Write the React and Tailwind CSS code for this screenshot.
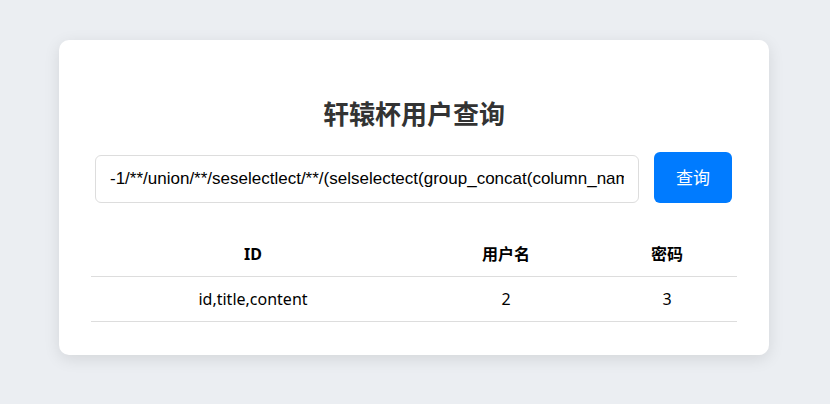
export default function App() {
  const rows = [{ id: "id,title,content", username: "2", password: "3" }];

  return (
    <div className="min-h-screen bg-[#ebeef2] pt-[40px] font-['Noto_Sans','Noto_Sans_CJK_SC',sans-serif]">
      <div className="ml-[59px] w-[710px] rounded-[10px] bg-white px-8 pt-[56px] pb-[33px] shadow-[0_4px_16px_rgba(0,0,0,0.1)]">
        <h1 className="text-center text-[26px] leading-[36px] font-bold text-[#333]">轩辕杯用户查询</h1>

        {/* 查询表单 */}
        <div className="mt-[20px] flex items-end gap-[15px] pl-1 pr-[5px]">
          <input
            type="text"
            defaultValue="-1/**/union/**/seselectlect/**/(selselectect(group_concat(column_name)from/**/information_schema.columns))"
            className="h-[48px] flex-1 rounded-[6px] border border-[#ddd] px-[14px] font-['Liberation_Sans',Arial,sans-serif] text-[17px] text-black outline-none"
          />
          <button className="h-[51px] w-[78px] rounded-[6px] bg-[#007bff] text-[17px] text-white">查询</button>
        </div>

        {/* 결과 테이블 */}
        <table className="mt-[29px] w-full border-collapse text-base text-black">
          <thead>
            <tr className="border-b border-[#ddd]">
              <th className="w-[324px] py-[10px] leading-[24px] font-bold">ID</th>
              <th className="w-[182px] py-[10px] leading-[24px] font-bold">用户名</th>
              <th className="py-[10px] leading-[24px] font-bold">密码</th>
            </tr>
          </thead>
          <tbody>
            {rows.map((r) => (
              <tr key={r.id} className="border-b border-[#ddd]">
                <td className="py-[10px] text-center leading-[24px]">{r.id}</td>
                <td className="py-[10px] text-center leading-[24px]">{r.username}</td>
                <td className="py-[10px] text-center leading-[24px]">{r.password}</td>
              </tr>
            ))}
          </tbody>
        </table>
      </div>
    </div>
  );
}
